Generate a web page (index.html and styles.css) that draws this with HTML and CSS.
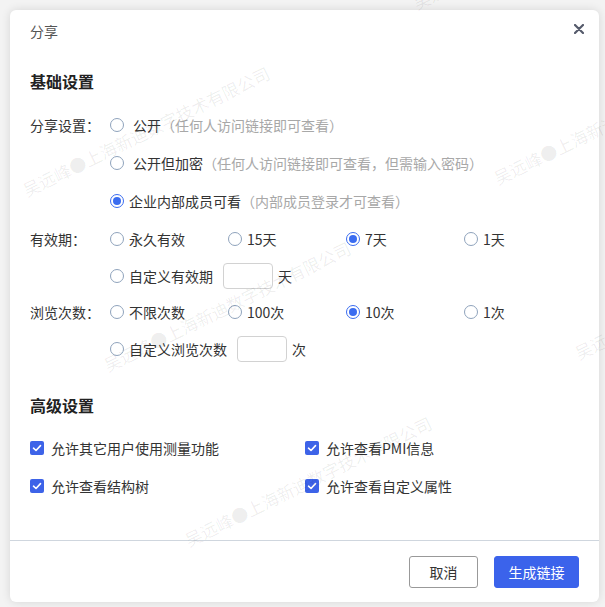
FILE: index.html
```html
<!doctype html>
<html>
<head>
<meta charset="utf-8">
<title>分享</title>
<link rel="stylesheet" href="styles.css">
</head>
<body>
<div class="dialog">
	<div class="dialog-head">
		<span class="dialog-title">分享</span>
		<span class="dialog-close">
			<svg width="10" height="10" viewBox="0 0 10 10"><path d="M1 1L9 9M9 1L1 9" stroke="#555a6b" stroke-width="2.2" stroke-linecap="round"/></svg>
		</span>
	</div>
	<div class="dialog-body">
		<h3 class="section-title">基础设置</h3>
		<div class="field">
			<div class="field-label">分享设置：</div>
			<div class="field-items">
				<div class="row"><label class="radio"><i></i><span class="wide">公开</span><em>（任何人访问链接即可查看）</em></label></div>
				<div class="row"><label class="radio"><i></i><span class="wide">公开但加密</span><em>（任何人访问链接即可查看，但需输入密码）</em></label></div>
				<div class="row"><label class="radio checked"><i></i><span>企业内部成员可看</span><em>（内部成员登录才可查看）</em></label></div>
			</div>
		</div>
		<div class="field">
			<div class="field-label">有效期：</div>
			<div class="field-items">
				<div class="row cols">
					<label class="radio"><i></i><span>永久有效</span></label>
					<label class="radio"><i></i><span>15天</span></label>
					<label class="radio checked"><i></i><span>7天</span></label>
					<label class="radio"><i></i><span>1天</span></label>
				</div>
				<div class="row custom">
					<label class="radio"><i></i><span>自定义有效期</span></label>
					<span class="num-input"></span><span>天</span>
				</div>
			</div>
		</div>
		<div class="field">
			<div class="field-label">浏览次数：</div>
			<div class="field-items">
				<div class="row cols">
					<label class="radio"><i></i><span>不限次数</span></label>
					<label class="radio"><i></i><span>100次</span></label>
					<label class="radio checked"><i></i><span>10次</span></label>
					<label class="radio"><i></i><span>1次</span></label>
				</div>
				<div class="row custom">
					<label class="radio"><i></i><span>自定义浏览次数</span></label>
					<span class="num-input"></span><span>次</span>
				</div>
			</div>
		</div>

		<h3 class="section-title advanced">高级设置</h3>
		<div class="checks">
			<label class="check"><i><svg width="14" height="14" viewBox="0 0 14 14"><path d="M3.5 7.2L6 9.5L10.5 4.6" fill="none" stroke="#fff" stroke-width="1.6" stroke-linecap="round" stroke-linejoin="round"/></svg></i><span>允许其它用户使用测量功能</span></label>
			<label class="check"><i><svg width="14" height="14" viewBox="0 0 14 14"><path d="M3.5 7.2L6 9.5L10.5 4.6" fill="none" stroke="#fff" stroke-width="1.6" stroke-linecap="round" stroke-linejoin="round"/></svg></i><span>允许查看PMI信息</span></label>
			<label class="check"><i><svg width="14" height="14" viewBox="0 0 14 14"><path d="M3.5 7.2L6 9.5L10.5 4.6" fill="none" stroke="#fff" stroke-width="1.6" stroke-linecap="round" stroke-linejoin="round"/></svg></i><span>允许查看结构树</span></label>
			<label class="check"><i><svg width="14" height="14" viewBox="0 0 14 14"><path d="M3.5 7.2L6 9.5L10.5 4.6" fill="none" stroke="#fff" stroke-width="1.6" stroke-linecap="round" stroke-linejoin="round"/></svg></i><span>允许查看自定义属性</span></label>
		</div>
	</div>
	<div class="dialog-foot">
		<button class="btn btn-cancel">取消</button>
		<button class="btn btn-primary">生成链接</button>
	</div>
</div>

<!-- 水印 -->
<div class="watermark">
	<span class="wm wm-a1">吴远峰●上海新迪数字技术有限公司</span>
	<span class="wm wm-a2">吴远峰●上海新迪数字技术有限公司</span>
	<span class="wm wm-a3">吴远峰●上海新迪数字技术有限公司</span>
	<span class="wm wm-b1">吴远峰●上海新迪数字技术有限公司</span>
	<span class="wm wm-b2">吴远峰●上海新迪数字技术有限公司</span>
	<span class="wm wm-b3">吴远峰●上海新迪数字技术有限公司</span>
</div>
</body>
</html>
```

FILE: styles.css
```css
html,body{
	margin:0;
	height:100%;
	overflow:hidden;
}
body{
	position:relative;
	background:#f3f3f3;
	font-family:"Noto Sans CJK SC","Noto Sans",sans-serif;
	font-size:14px;
	color:#333;
}
.dialog{
	margin:10px;
	width:589px;
	height:592px;
	background:#fff;
	border-radius:6px;
	box-shadow:0 0 10px rgba(0,0,0,0.12);
	display:flex;
	flex-direction:column;
}
.dialog-head{
	display:flex;
	justify-content:space-between;
	align-items:flex-start;
	padding:12px 15px 0 20px;
	height:30px;
}
.dialog-title{
	line-height:18px;
	color:#555;
}
.dialog-close{
	margin-top:2px;
	width:10px;
	height:10px;
	display:block;
}
.dialog-close svg{
	display:block;
}
.dialog-body{
	flex:1;
	padding:17px 20px 0;
}
.section-title{
	margin:0 0 13px;
	font-size:16px;
	line-height:24px;
	font-weight:bold;
	color:#222;
}
.section-title.advanced{
	margin-top:27px;
	margin-bottom:12px;
}
.field{
	display:flex;
}
.field-label{
	width:80px;
	height:38px;
	line-height:38px;
	color:#333;
	flex-shrink:0;
}
.field-items{
	flex:1;
}
.row{
	height:38px;
	display:flex;
	align-items:center;
	white-space:nowrap;
}
.row.custom{
	height:35px;
}
.row.cols{
	display:grid;
	grid-template-columns:repeat(4,118px);
	align-items:center;
}
.radio{
	display:flex;
	align-items:center;
	cursor:pointer;
}
.radio i{
	box-sizing:border-box;
	width:14px;
	height:14px;
	border:1px solid #8fa3bc;
	border-radius:50%;
	margin-right:5px;
	position:relative;
	flex-shrink:0;
}
.radio.checked i{
	border:1.5px solid #3a6cf0;
}
.radio.checked i::after{
	content:"";
	position:absolute;
	left:50%;
	top:50%;
	width:8px;
	height:8px;
	margin:-4px 0 0 -4px;
	border-radius:50%;
	background:#3a6cf0;
}
.radio .wide{
	margin-left:4px;
}
.radio em{
	font-style:normal;
	color:#a8a8a8;
}
.num-input{
	box-sizing:border-box;
	width:50px;
	height:26px;
	border:1px solid #d2d2d2;
	border-radius:4px;
	margin:0 5px 0 10px;
}
.checks{
	display:grid;
	grid-template-columns:275px 275px;
	grid-auto-rows:38px;
	align-items:center;
}
.check{
	display:flex;
	align-items:center;
}
.check i{
	width:14px;
	height:14px;
	border-radius:2px;
	background:#3d63e8;
	margin-right:7px;
}
.check i svg{
	display:block;
}
.dialog-foot{
	border-top:1px solid #cfd6de;
	height:46px;
	padding:15px 20px 0;
	display:flex;
	justify-content:flex-end;
	gap:16px;
}
.btn{
	height:32px;
	border-radius:3px;
	font-family:inherit;
	font-size:14px;
	padding:0;
	cursor:pointer;
}
.btn-cancel{
	width:69px;
	background:#fff;
	border:1px solid #999;
	color:#333;
}
.btn-primary{
	width:85px;
	background:#3b63eb;
	border:1px solid #3b63eb;
	color:#fff;
}
.watermark{
	position:absolute;
	left:0;
	top:0;
	right:0;
	bottom:0;
	pointer-events:none;
	overflow:hidden;
}
.wm{
	position:absolute;
	font-size:17px;
	line-height:20px;
	white-space:nowrap;
	color:rgba(0,0,0,0.07);
	transform:rotate(-26deg);
	transform-origin:0 50%;
}
.wm-a1{left:24px;top:181px;}
.wm-a2{left:105px;top:356px;}
.wm-a3{left:186px;top:531px;}
.wm-b1{left:414px;top:-6px;}
.wm-b2{left:495px;top:169px;}
.wm-b3{left:576px;top:344px;}
```
